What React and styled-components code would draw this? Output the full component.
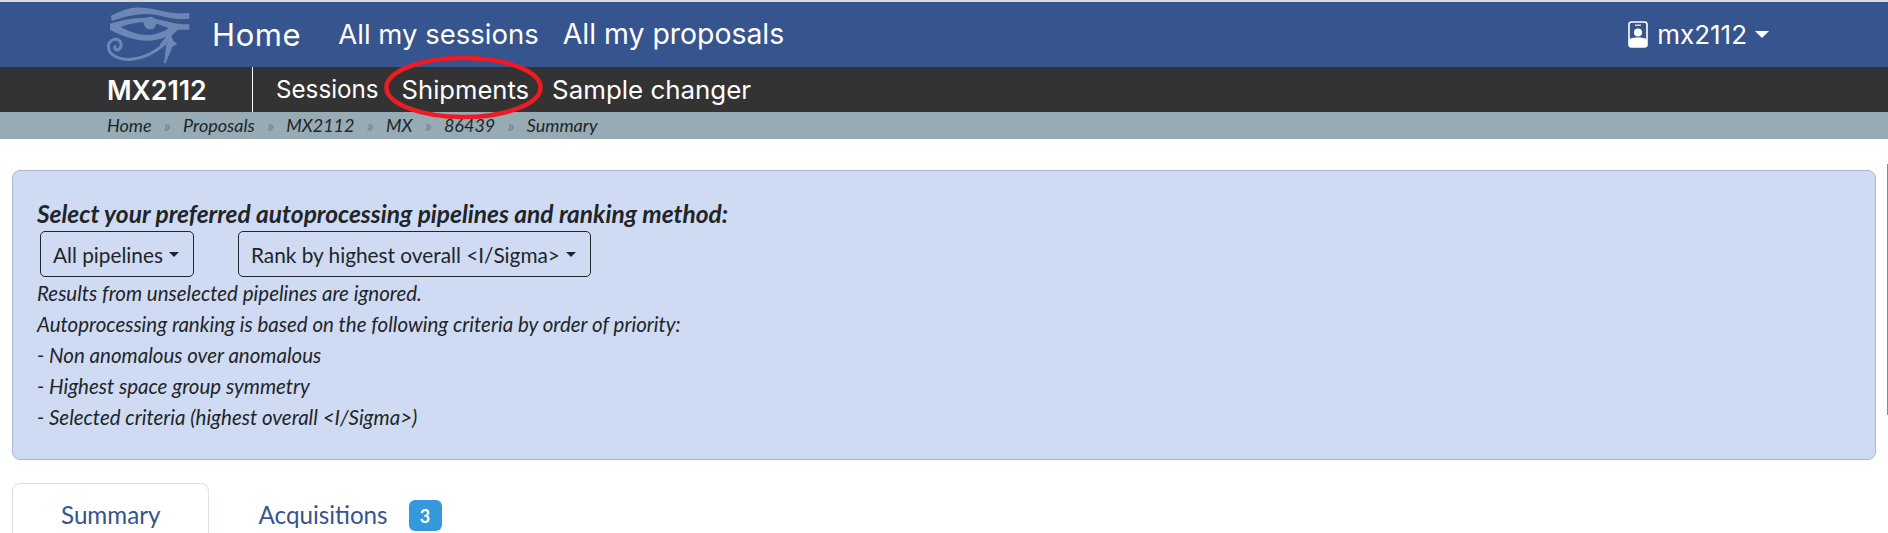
import React from 'react'
import styled, { createGlobalStyle } from 'styled-components'

const GlobalStyle = createGlobalStyle`
  html, body {
    margin: 0;
    padding: 0;
    background: #fff;
    overflow: hidden;
  }
  body {
    font-family: Lato, "Liberation Sans", sans-serif;
    color: #212529;
  }
`

const navFont = `Inter, "Open Sans", sans-serif`

const Page = styled.div`
  position: relative;
  width: 1888px;
  height: 533px;
  overflow: hidden;
  border-top: 2px solid #d5d8dd;
  box-sizing: border-box;
  background: #fff;
`

const TopBar = styled.div`
  display: flex;
  align-items: center;
  height: 65px;
  padding-left: 105px;
  background: #36548d;
  color: #fff;
  font-family: ${navFont};
`

const Logo = styled.svg`
  width: 90px;
  height: 64px;
  flex-shrink: 0;
`

const TopLink = styled.a`
  font-size: ${p => p.$size}px;
  margin-left: ${p => p.$gap}px;
  letter-spacing: ${p => p.$spacing || 0}px;
  line-height: 1;
`

const UserMenu = styled.div`
  display: flex;
  align-items: center;
  margin-left: auto;
  margin-right: 119px;
  font-size: 26px;
`

const IdIcon = styled.svg`
  width: 20px;
  height: 27px;
  margin-right: 9px;
`

const Caret = styled.span`
  display: inline-block;
  margin-left: ${p => p.$gap}px;
  border-top: ${p => p.$size}px solid ${p => p.$color};
  border-left: ${p => p.$size}px solid transparent;
  border-right: ${p => p.$size}px solid transparent;
`

const SubBar = styled.div`
  display: flex;
  align-items: stretch;
  height: 45px;
  padding-left: 107px;
  background: #333;
  color: #fff;
  font-family: ${navFont};
`

const ProposalName = styled.div`
  display: flex;
  align-items: center;
  width: 145px;
  font-size: 26.7px;
  font-weight: 600;
  border-right: 1px solid #fff;
`

const SubLinks = styled.div`
  display: flex;
  align-items: center;
  gap: 23px;
  padding-left: 23px;
`

const SubLink = styled.span`
  font-size: ${p => p.$size}px;
`

const Breadcrumbs = styled.div`
  display: flex;
  align-items: center;
  box-sizing: border-box;
  height: 27px;
  padding: 0 0 1px 107px;
  background: #97abb5;
  font-size: 18px;
  font-style: italic;
  color: #212529;
`

const Sep = styled.span`
  margin: 0 12.2px;
  color: #6f7f88;
`

const Panel = styled.div`
  box-sizing: border-box;
  margin: 31px 12px 0;
  height: 290px;
  padding: 28px 24px 0;
  background: #cfdbf3;
  border: 1px solid #a9b6d3;
  border-radius: 8px;
  font-style: italic;
  font-size: 20.5px;
  line-height: 31px;
  color: #212529;
`

const PanelTitle = styled.div`
  font-size: 24.5px;
  font-weight: 700;
  line-height: 29px;
`

const Selects = styled.div`
  display: flex;
  gap: 44px;
  margin: 3px 0 1px 3px;
`

const Select = styled.div`
  display: flex;
  align-items: center;
  box-sizing: border-box;
  height: 46px;
  padding: 0 14px 0 12px;
  border: 1px solid #212529;
  border-radius: 5px;
  font-style: normal;
  font-size: 20.8px;
`

const Tabs = styled.div`
  display: flex;
  margin: 23px 12px 0;
  font-size: 24.2px;
  color: #36548d;
`

const Tab = styled.div`
  display: flex;
  align-items: flex-start;
  box-sizing: border-box;
  height: 60px;
  padding: 16px 48px 0;
  border: 1px solid ${p => (p.$active ? '#dee2e6' : 'transparent')};
  border-bottom: 0;
  border-radius: 8px 8px 0 0;
`

const Badge = styled.span`
  display: inline-flex;
  align-items: center;
  justify-content: center;
  width: 33px;
  height: 31px;
  margin-left: 21px;
  border-radius: 6px;
  background: #3498db;
  color: #fff;
  font-size: 18px;
  font-weight: 700;
`

const Annotation = styled.svg`
  position: absolute;
  left: 380px;
  top: 50px;
  width: 170px;
  height: 70px;
  pointer-events: none;
`

const WindowEdge = styled.div`
  position: absolute;
  right: 0;
  top: 162px;
  width: 1px;
  height: 251px;
  background: #8a8a8a;
`

const EyeLogo = () => (
  <Logo viewBox="45 6 270 192">
    <g fill="#6d87b4">
      <path d="M63 44 C85 32 110 22 135 20 C165 17 200 26 235 34 C255 38 280 38 298 36 L298 53 C270 56 245 53 225 48 C195 39 165 37 135 42 C110 45 85 53 65 60 Z" />
      <path
        fillRule="evenodd"
        d="M60 68 C85 60 125 50 165 50 C205 50 240 70 298 70 L298 86 L264 86 C245 102 215 117 175 119 C135 120 90 102 60 86 Z M92 78 C118 92 145 102 175 102 C200 101 220 92 236 82 C215 72 190 64 165 64 C140 64 115 70 92 78 Z"
      />
      <circle cx="180" cy="66" r="19" />
      <path d="M240 95 L250 120 L262 128 L248 137 L226 188 L222 185 L230 122 Z" />
    </g>
    <g fill="none" stroke="#6d87b4" strokeLinecap="round">
      <path strokeWidth="11" d="M250 90 L215 132" />
      <path strokeWidth="9" d="M225 128 C200 150 165 172 125 175 C85 178 55 160 55 137 C55 120 70 113 82 115 C95 120 97 135 87 145 C80 150 72 145 75 137" />
    </g>
  </Logo>
)

const crumbs = ['Home', 'Proposals', 'MX2112', 'MX', '86439', 'Summary']

const notes = [
  'Results from unselected pipelines are ignored.',
  'Autoprocessing ranking is based on the following criteria by order of priority:',
  '- Non anomalous over anomalous',
  '- Highest space group symmetry',
  '- Selected criteria (highest overall <I/Sigma>)',
]

export default function App() {
  return (
    <Page>
      <GlobalStyle />
      <TopBar>
        <EyeLogo />
        <TopLink $size={31} $gap={17} $spacing={0.6}>Home</TopLink>
        <TopLink $size={27.5} $gap={37}>All my sessions</TopLink>
        <TopLink $size={28.4} $gap={24}>All my proposals</TopLink>
        <UserMenu>
          <IdIcon viewBox="0 0 20 27">
            <rect x="1" y="1" width="18" height="25" rx="2.5" fill="none" stroke="#fff" strokeWidth="1.6" />
            <rect x="7" y="3.6" width="6" height="1.2" fill="#fff" />
            <circle cx="10" cy="11.5" r="4" fill="#fff" />
            <path d="M1 26 V20 C1 17.5 4 16.5 10 16.5 C16 16.5 19 17.5 19 20 V26 Z" fill="#fff" />
          </IdIcon>
          mx2112
          <Caret $size={7.5} $gap={8} $color="#fff" />
        </UserMenu>
      </TopBar>
      <SubBar>
        <ProposalName>MX2112</ProposalName>
        <SubLinks>
          <SubLink $size={24.2}>Sessions</SubLink>
          <SubLink $size={25.6}>Shipments</SubLink>
          <SubLink $size={25.9}>Sample changer</SubLink>
        </SubLinks>
      </SubBar>
      <Breadcrumbs>
        {crumbs.map((c, i) => (
          <React.Fragment key={c}>
            {i > 0 && <Sep>»</Sep>}
            <span>{c}</span>
          </React.Fragment>
        ))}
      </Breadcrumbs>
      <Panel>
        <PanelTitle>Select your preferred autoprocessing pipelines and ranking method:</PanelTitle>
        <Selects>
          <Select>All pipelines<Caret $size={5} $gap={6} $color="#212529" /></Select>
          <Select>Rank by highest overall &lt;I/Sigma&gt;<Caret $size={5} $gap={6} $color="#212529" /></Select>
        </Selects>
        {notes.map(n => <div key={n}>{n}</div>)}
      </Panel>
      <Tabs>
        <Tab $active>Summary</Tab>
        <Tab>Acquisitions<Badge>3</Badge></Tab>
      </Tabs>
      <WindowEdge />
      <Annotation viewBox="0 0 170 70">
        <ellipse cx="83.5" cy="35.5" rx="77" ry="29.5" fill="none" stroke="#ed1c24" strokeWidth="4.5" />
      </Annotation>
    </Page>
  )
}
